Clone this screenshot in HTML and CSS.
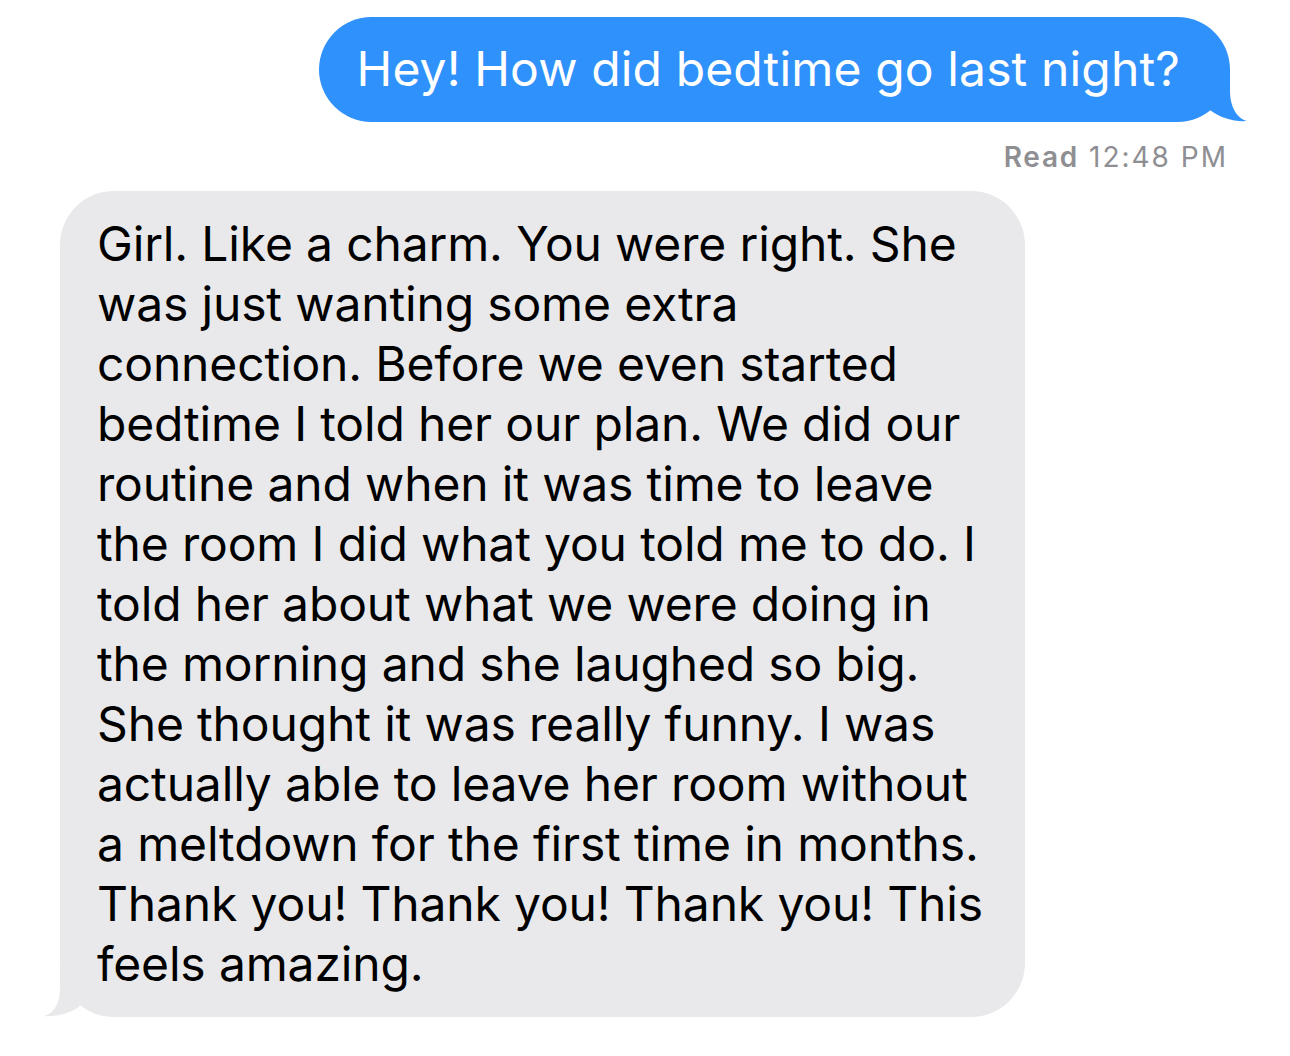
FILE: index.html
```html
<!DOCTYPE html>
<html>
<head>
<meta charset="utf-8">
<link rel="stylesheet" href="styles.css">
</head>
<body>
<div class="thread">
  <div class="row row-out">
    <div class="bubble bubble-out">Hey! How did bedtime go last night?
      <svg class="tail tail-out" width="60" height="54" viewBox="0 0 60 54"><path d="M40 0 L40 23 C40 40 48 51 57 53 C45 54 30 50 20 42 L30 30 Z" fill="#2f91fb"/></svg>
    </div>
  </div>
  <div class="receipt"><span class="receipt-label">Read</span> 12:48 PM</div>
  <div class="row row-in">
    <div class="bubble bubble-in">Girl. Like a charm. You were right. She<br>was just wanting some extra<br>connection. Before we even started<br>bedtime I told her our plan. We did our<br>routine and when it was time to leave<br>the room I did what you told me to do. I<br>told her about what we were doing in<br>the morning and she laughed so big.<br>She thought it was really funny. I was<br>actually able to leave her room without<br>a meltdown for the first time in months.<br>Thank you! Thank you! Thank you! This<br>feels amazing.
      <svg class="tail tail-in" width="60" height="54" viewBox="0 0 60 54"><path d="M20 0 L20 26 C20 42 12 52 3 53 C15 54 30 51 40 43 L32 30 Z" fill="#e9e9eb"/></svg>
    </div>
  </div>
</div>
</body>
</html>
```
FILE: styles.css
```css
html, body {
  margin: 0;
  padding: 0;
  background: #ffffff;
}
.thread {
  width: 1290px;
  padding: 17px 60px 0 60px;
  box-sizing: border-box;
  font-family: Inter, "Noto Sans", sans-serif;
}
.row {
  display: flex;
}
.row-out {
  justify-content: flex-end;
}
.row-in {
  justify-content: flex-start;
  margin-top: 16px;
}
.bubble {
  position: relative;
  font-size: 48px;
  line-height: 60px;
  white-space: nowrap;
  letter-spacing: -0.15px;
}
.bubble-out {
  background: #2f91fb;
  color: #ffffff;
  border-radius: 53px;
  height: 105px;
  box-sizing: border-box;
  padding: 22px 50px 0 38px;
  letter-spacing: 0.14px;
}
.bubble-in {
  background: #e9e9eb;
  color: #000000;
  border-radius: 54px;
  width: 965px;
  box-sizing: border-box;
  padding: 23px 20px 23px 37px;
}
.tail {
  position: absolute;
  bottom: 0;
}
.tail-out {
  right: -20px;
}
.tail-in {
  left: -20px;
}
.receipt {
  text-align: right;
  font-size: 28px;
  line-height: 36px;
  margin-top: 17px;
  padding-right: 2px;
  letter-spacing: 2px;
  color: #8e8e93;
}
.receipt-label {
  font-weight: 600;
  letter-spacing: 1.8px;
}
```
